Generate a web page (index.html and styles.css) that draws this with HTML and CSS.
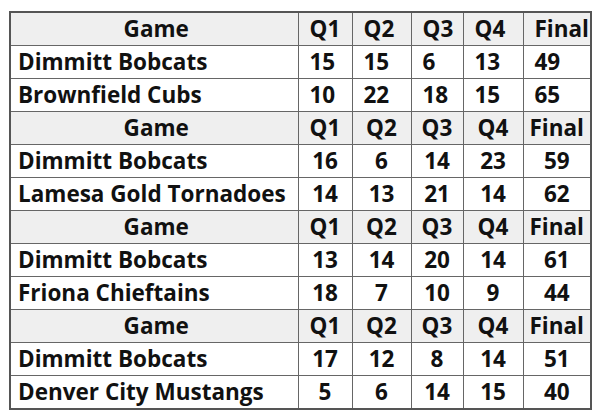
FILE: index.html
```html
<!DOCTYPE html>
<html lang="en">
<head>
    <meta charset="UTF-8">
    <title>Dimmitt Bobcats Scores</title>
    <link rel="stylesheet" href="styles.css">
</head>
<body>
    <table class="scores">
        <colgroup>
            <col class="col-game">
            <col class="col-q1">
            <col class="col-q2">
            <col class="col-q3">
            <col class="col-q4">
            <col class="col-final">
        </colgroup>
        <tbody class="block first">
            <tr class="head"><td class="team">Game</td><td>Q1</td><td>Q2</td><td>Q3</td><td>Q4</td><td>Final</td></tr>
            <tr><td class="team">Dimmitt Bobcats</td><td>15</td><td>15</td><td>6</td><td>13</td><td>49</td></tr>
            <tr><td class="team">Brownfield Cubs</td><td>10</td><td>22</td><td>18</td><td>15</td><td>65</td></tr>
        </tbody>
        <tbody class="block">
            <tr class="head"><td class="team">Game</td><td>Q1</td><td>Q2</td><td>Q3</td><td>Q4</td><td>Final</td></tr>
            <tr><td class="team">Dimmitt Bobcats</td><td>16</td><td>6</td><td>14</td><td>23</td><td>59</td></tr>
            <tr><td class="team">Lamesa Gold Tornadoes</td><td>14</td><td>13</td><td>21</td><td>14</td><td>62</td></tr>
        </tbody>
        <tbody class="block">
            <tr class="head"><td class="team">Game</td><td>Q1</td><td>Q2</td><td>Q3</td><td>Q4</td><td>Final</td></tr>
            <tr><td class="team">Dimmitt Bobcats</td><td>13</td><td>14</td><td>20</td><td>14</td><td>61</td></tr>
            <tr><td class="team">Friona Chieftains</td><td>18</td><td>7</td><td>10</td><td>9</td><td>44</td></tr>
        </tbody>
        <tbody class="block">
            <tr class="head"><td class="team">Game</td><td>Q1</td><td>Q2</td><td>Q3</td><td>Q4</td><td>Final</td></tr>
            <tr><td class="team">Dimmitt Bobcats</td><td>17</td><td>12</td><td>8</td><td>14</td><td>51</td></tr>
            <tr><td class="team">Denver City Mustangs</td><td>5</td><td>6</td><td>14</td><td>15</td><td>40</td></tr>
        </tbody>
    </table>
</body>
</html>
```
FILE: styles.css
```css
body {
    margin: 0;
    padding: 11px 9px;
    background-color: #fff;
    font-family: "Open Sans", Lato, sans-serif;
    color: #111;
}

.scores {
    border-collapse: collapse;
    table-layout: fixed;
    width: 582px;
    border: 2px solid #555;
    font-size: 22.5px;
    font-weight: bold;
}

.col-game { width: 288px; }
.col-q1 { width: 54px; }
.col-q2 { width: 59px; }
.col-q3 { width: 52px; }
.col-q4 { width: 60px; }
.col-final { width: 68px; }

.scores td {
    border: 1px solid #666;
    height: 32px;
    padding: 0 3px;
    text-align: center;
    line-height: 1;
    white-space: nowrap;
}

.scores td.team {
    text-align: left;
    padding-left: 7px;
}

.scores .head td {
    background-color: #efefef;
}

.scores .head td.team {
    text-align: center;
}

/* first game is left aligned in the original */
.block.first td {
    text-align: left;
    padding-left: 11px;
}

.block.first .head td.team {
    text-align: center;
}

.block.first td.team {
    padding-left: 7px;
}
```
